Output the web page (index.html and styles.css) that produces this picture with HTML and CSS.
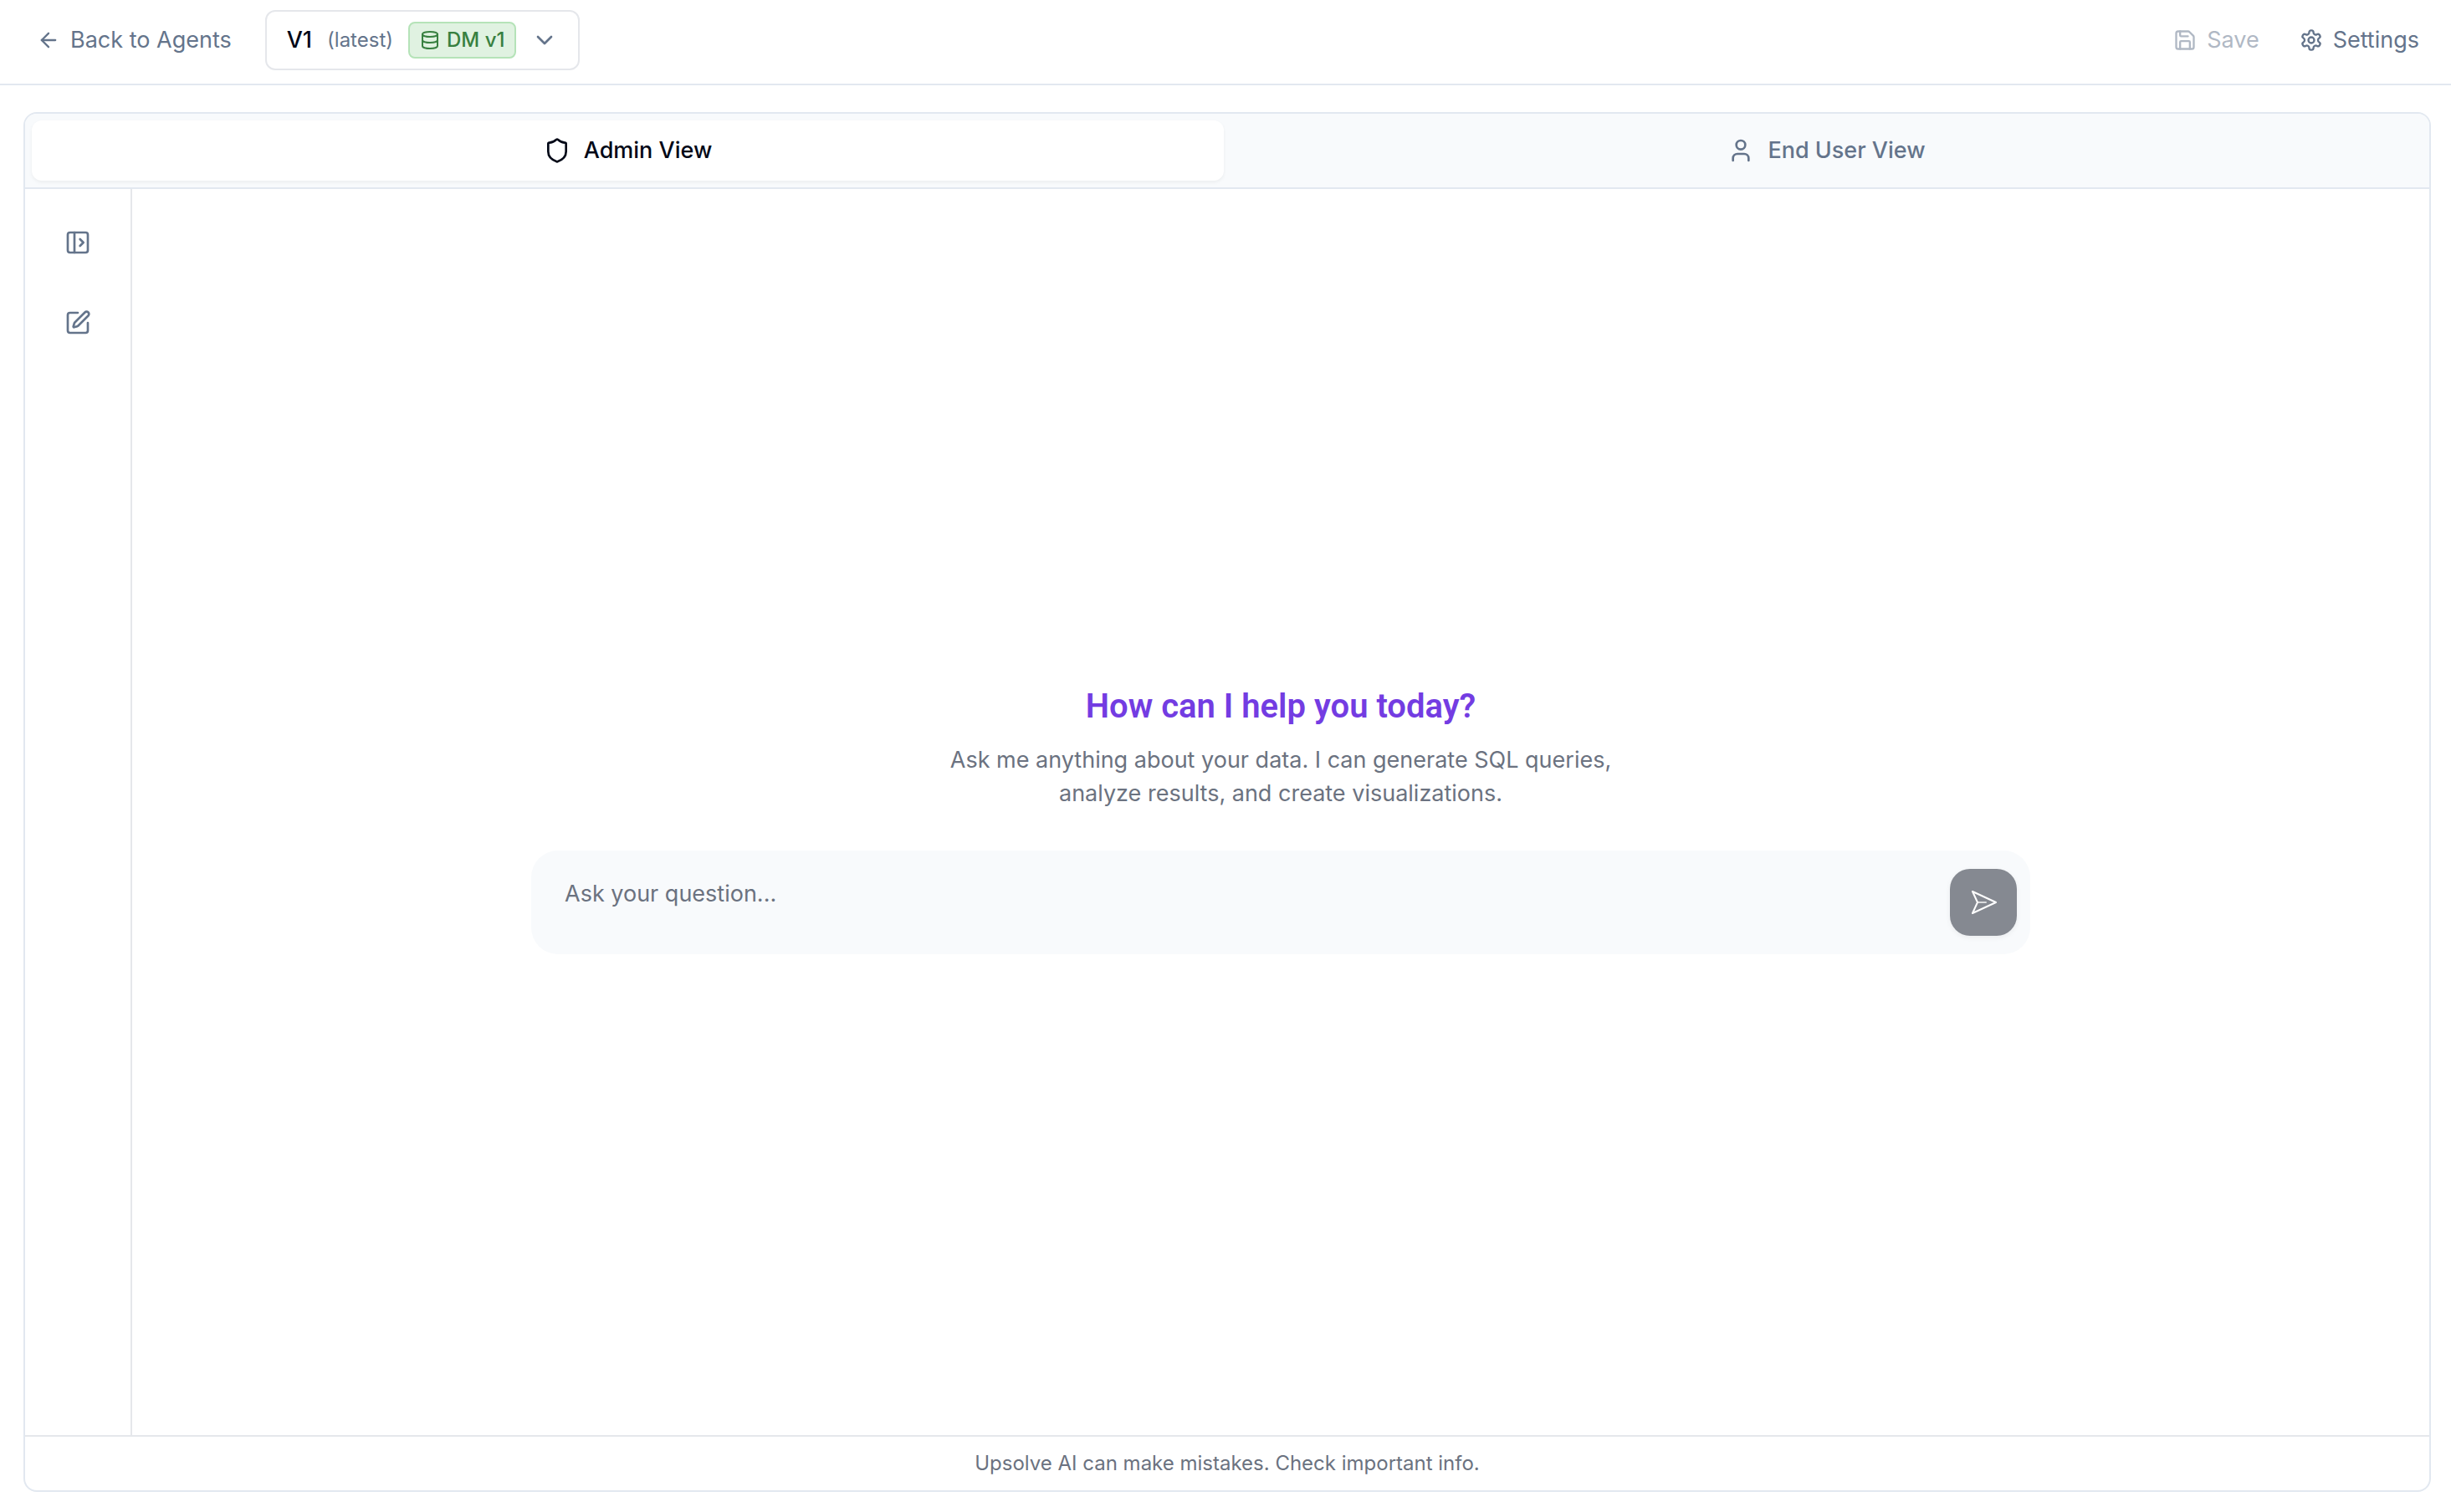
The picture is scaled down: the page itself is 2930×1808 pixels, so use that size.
FILE: index.html
```html
<!DOCTYPE html>
<html lang="en">
<head>
    <meta charset="UTF-8">
    <meta name="viewport" content="width=device-width, initial-scale=1">
    <title>Agent Playground</title>
    <link rel="stylesheet" href="styles.css">
</head>
<body>
    <header class="topbar">
        <div class="topbar-group">
            <a href="#" class="nav-link">
                <svg class="icon icon-sm" viewBox="0 0 24 24"><path d="m12 19-7-7 7-7"/><path d="M19 12H5"/></svg>
                Back to Agents
            </a>
            <button type="button" class="version" aria-haspopup="listbox">
                <span class="version-name">V1</span>
                <span class="version-note">(latest)</span>
                <span class="badge">
                    <svg class="icon icon-xs" viewBox="0 0 24 24"><ellipse cx="12" cy="5" rx="9" ry="3"/><path d="M3 5v14a9 3 0 0 0 18 0V5"/><path d="M3 12a9 3 0 0 0 18 0"/></svg>
                    DM v1
                </span>
                <svg class="icon" viewBox="0 0 24 24"><path d="m6 9 6 6 6-6"/></svg>
            </button>
        </div>
        <div class="topbar-group actions">
            <button type="button" class="nav-link" disabled>
                <svg class="icon icon-sm" viewBox="0 0 24 24"><path d="M15.2 3a2 2 0 0 1 1.4.6l3.8 3.8a2 2 0 0 1 .6 1.4V19a2 2 0 0 1-2 2H5a2 2 0 0 1-2-2V5a2 2 0 0 1 2-2z"/><path d="M17 21v-7a1 1 0 0 0-1-1H8a1 1 0 0 0-1 1v7"/><path d="M7 3v4a1 1 0 0 0 1 1h7"/></svg>
                Save
            </button>
            <button type="button" class="nav-link">
                <svg class="icon icon-sm" viewBox="0 0 24 24"><path d="M12.22 2h-.44a2 2 0 0 0-2 2v.18a2 2 0 0 1-1 1.73l-.43.25a2 2 0 0 1-2 0l-.15-.08a2 2 0 0 0-2.73.73l-.22.38a2 2 0 0 0 .73 2.73l.15.1a2 2 0 0 1 1 1.72v.51a2 2 0 0 1-1 1.74l-.15.09a2 2 0 0 0-.73 2.73l.22.38a2 2 0 0 0 2.73.73l.15-.08a2 2 0 0 1 2 0l.43.25a2 2 0 0 1 1 1.73V20a2 2 0 0 0 2 2h.44a2 2 0 0 0 2-2v-.18a2 2 0 0 1 1-1.73l.43-.25a2 2 0 0 1 2 0l.15.08a2 2 0 0 0 2.73-.73l.22-.39a2 2 0 0 0-.73-2.73l-.15-.08a2 2 0 0 1-1-1.74v-.5a2 2 0 0 1 1-1.74l.15-.09a2 2 0 0 0 .73-2.73l-.22-.38a2 2 0 0 0-2.73-.73l-.15.08a2 2 0 0 1-2 0l-.43-.25a2 2 0 0 1-1-1.73V4a2 2 0 0 0-2-2z"/><circle cx="12" cy="12" r="3"/></svg>
                Settings
            </button>
        </div>
    </header>

    <div class="panel">
        <div class="tabs" role="tablist">
            <button type="button" class="tab active" role="tab" aria-selected="true">
                <svg class="icon" viewBox="0 0 24 24"><path d="M20 13c0 5-3.5 7.5-7.66 8.95a1 1 0 0 1-.67-.01C7.5 20.5 4 18 4 13V6a1 1 0 0 1 1-1c2 0 4.5-1.2 6.24-2.72a1.17 1.17 0 0 1 1.52 0C14.51 3.81 17 5 19 5a1 1 0 0 1 1 1z"/></svg>
                Admin View
            </button>
            <button type="button" class="tab" role="tab" aria-selected="false">
                <svg class="icon" viewBox="0 0 24 24"><path d="M19 21v-2a4 4 0 0 0-4-4H9a4 4 0 0 0-4 4v2"/><circle cx="12" cy="7" r="4"/></svg>
                End User View
            </button>
        </div>

        <div class="workspace">
            <nav class="sidebar" aria-label="Chats">
                <button type="button" class="icon-button" aria-label="Open sidebar">
                    <svg class="icon" viewBox="0 0 24 24"><rect width="18" height="18" x="3" y="3" rx="2"/><path d="M9 3v18"/><path d="m14 9 3 3-3 3"/></svg>
                </button>
                <button type="button" class="icon-button" aria-label="New chat">
                    <svg class="icon" viewBox="0 0 24 24"><path d="M12 3H5a2 2 0 0 0-2 2v14a2 2 0 0 0 2 2h14a2 2 0 0 0 2-2v-7"/><path d="M18.375 2.625a1 1 0 0 1 3 3l-9.013 9.014a2 2 0 0 1-.853.505l-2.873.84a.5.5 0 0 1-.62-.62l.84-2.873a2 2 0 0 1 .506-.852z"/></svg>
                </button>
            </nav>

            <main class="chat">
                <h1 class="title">How can I help you today?</h1>
                <p class="intro">Ask me anything about your data. I can generate SQL queries, analyze results, and create visualizations.</p>
                <form class="composer">
                    <textarea class="question" rows="1" placeholder="Ask your question..." aria-label="Ask your question"></textarea>
                    <button type="submit" class="send" aria-label="Send" disabled>
                        <svg class="send-icon" viewBox="0 0 32 32"><path d="M3 3 31 16 3 29 9 16z"/><path class="send-fold" d="M9 16h10"/></svg>
                    </button>
                </form>
            </main>
        </div>

        <footer class="disclaimer">Upsolve AI can make mistakes. Check important info.</footer>
    </div>
</body>
</html>
```
FILE: styles.css
```css
* {
    box-sizing: border-box;
}
body {
    margin: 0;
    min-height: 100vh;
    display: flex;
    flex-direction: column;
    background: #fff;
    color: #020817;
    font-family: Inter, "Liberation Sans", sans-serif;
    font-size: 27px;
    line-height: 40px;
}
button {
    margin: 0;
    padding: 0;
    border: none;
    background: none;
    color: inherit;
    font: inherit;
    cursor: pointer;
}

/* icons */
.icon {
    width: 32px;
    height: 32px;
    flex: none;
    fill: none;
    stroke: currentColor;
    stroke-width: 2;
    stroke-linecap: round;
    stroke-linejoin: round;
}
.icon-sm {
    width: 28px;
    height: 28px;
}
.icon-xs {
    width: 24px;
    height: 24px;
}

/* top bar */
.topbar {
    display: flex;
    justify-content: space-between;
    padding: 12px 38px 16px 44px;
    border-bottom: 2px solid #e2e8f0;
}
.topbar-group {
    display: flex;
    align-items: center;
    gap: 40px;
}
.actions {
    gap: 48px;
}
.nav-link {
    display: flex;
    align-items: center;
    gap: 12px;
    color: #64748b;
    text-decoration: none;
}
.nav-link:disabled {
    opacity: 0.5;
    cursor: default;
}
.version {
    display: flex;
    align-items: center;
    gap: 18px;
    height: 72px;
    padding: 0 24px;
    border: 2px solid #e5e7eb;
    border-radius: 12px;
    color: #64748b;
}
.version-name {
    color: #020817;
    font-weight: 500;
}
.version-note {
    font-size: 24px;
}
.badge {
    display: flex;
    align-items: center;
    gap: 8px;
    padding: 0 12px;
    border: 2px solid #b5e3b8;
    border-radius: 8px;
    background: #e0f2e1;
    color: #388040;
    font-size: 24px;
    font-weight: 500;
}

/* panel */
.panel {
    flex: 1;
    display: flex;
    flex-direction: column;
    margin: 32px 24px 24px 28px;
    border: 2px solid #e2e8f0;
    border-radius: 16px;
    overflow: hidden;
}
.tabs {
    display: grid;
    grid-template-columns: 1fr 1fr;
    gap: 8px;
    padding: 8px;
    background: #f8fafc;
    border-bottom: 2px solid #e2e8f0;
}
.tab {
    display: flex;
    align-items: center;
    justify-content: center;
    gap: 16px;
    padding: 16px;
    border-radius: 12px;
    color: #64748b;
    font-weight: 500;
}
.tab.active {
    background: #fff;
    color: #020817;
    box-shadow: 0 2px 4px rgba(0, 0, 0, 0.05);
}
.workspace {
    flex: 1;
    display: flex;
}
.sidebar {
    display: flex;
    flex-direction: column;
    align-items: center;
    gap: 32px;
    width: 128px;
    padding: 32px 0;
    border-right: 2px solid #e5e7eb;
}
.icon-button {
    display: flex;
    align-items: center;
    justify-content: center;
    width: 64px;
    height: 64px;
    color: #64748b;
}

/* chat */
.chat {
    flex: 1;
    display: flex;
    flex-direction: column;
    align-items: center;
    justify-content: center;
    padding: 16px 32px 0;
}
.title {
    margin: 0 0 16px;
    color: #733ce2;
    font-family: Roboto, Inter, sans-serif;
    font-size: 40px;
    line-height: 56px;
    font-weight: 600;
}
.intro {
    max-width: 840px;
    margin: 0 0 48px;
    color: #6b7280;
    text-align: center;
}
.composer {
    display: flex;
    align-items: center;
    gap: 16px;
    width: 100%;
    max-width: 1792px;
    padding: 22px 16px 22px 40px;
    border-radius: 32px;
    background: #f8fafc;
}
.question {
    flex: 1;
    height: 80px;
    padding: 10px 0;
    border: none;
    outline: none;
    resize: none;
    background: none;
    color: #020817;
    font: inherit;
}
.question::placeholder {
    color: #6b7280;
}
.send {
    display: flex;
    align-items: center;
    justify-content: center;
    width: 80px;
    height: 80px;
    border-radius: 24px;
    background: #858991;
    box-shadow: 0 2px 6px rgba(0, 0, 0, 0.06);
}
.send-icon {
    width: 32px;
    height: 32px;
    fill: none;
    stroke: #fff;
    stroke-width: 2;
    stroke-linecap: round;
    stroke-linejoin: round;
}
.send-fold {
    opacity: 0.7;
}

.disclaimer {
    padding: 12px;
    border-top: 2px solid #e5e7eb;
    color: #6b7280;
    font-size: 24px;
    text-align: center;
}
```
